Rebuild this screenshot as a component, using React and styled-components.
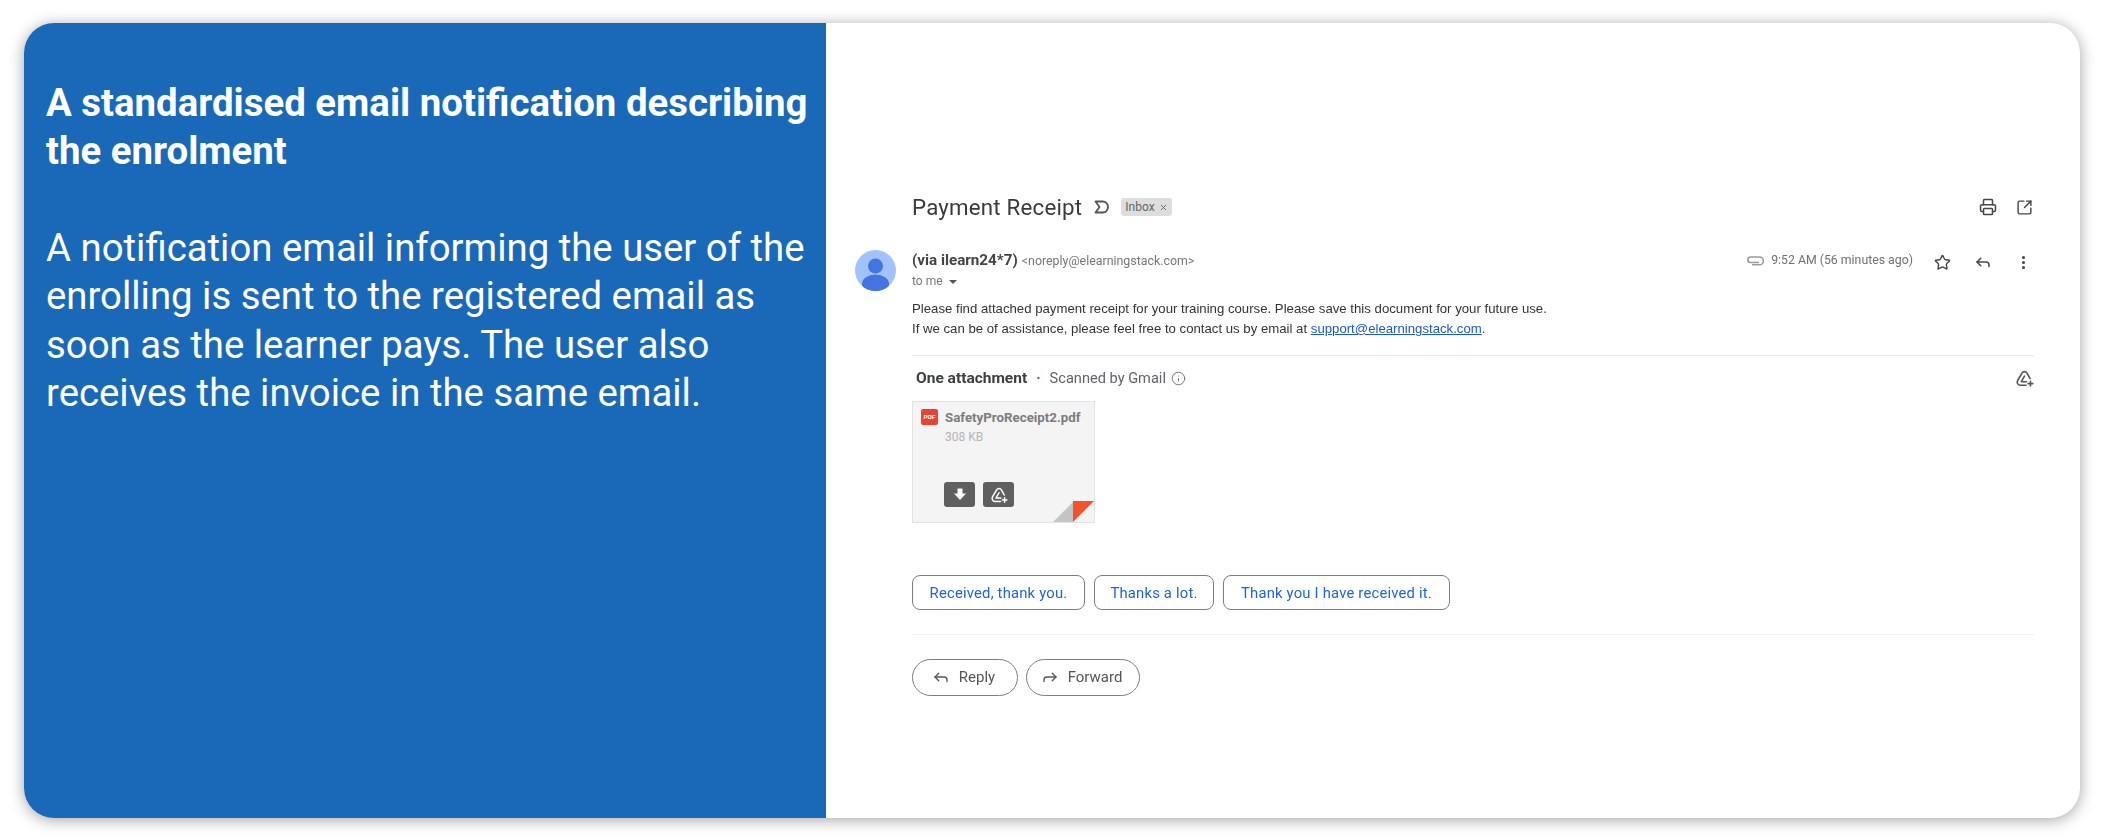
import React from 'react';
import styled, { createGlobalStyle } from 'styled-components';
import { Printer, SquareArrowOutUpRight, Star, Reply, Forward, EllipsisVertical, Info, X } from 'lucide-react';

const GlobalStyle = createGlobalStyle`
  html, body {
    margin: 0;
    padding: 0;
    background: #fff;
  }
  body {
    font-family: "Liberation Sans", Arial, sans-serif;
  }
`;

const Page = styled.div`
  width: 2101px;
  height: 839px;
  box-sizing: border-box;
  padding: 23px 21px 21px 24px;
  overflow: hidden;
`;

const Card = styled.div`
  display: flex;
  height: 795px;
  border-radius: 30px;
  overflow: hidden;
  background: #fff;
  box-shadow: 0 2px 15px rgba(0, 0, 0, 0.36);
`;

const Side = styled.div`
  width: 802px;
  flex: none;
  box-sizing: border-box;
  padding: 56px 8px 0 22px;
  background: #1a69b8;
  color: #fff;
  font-family: Roboto, sans-serif;
`;

const Heading = styled.h1`
  margin: 0 0 50px;
  font-size: 38.4px;
  line-height: 47.5px;
  font-weight: 700;
`;

const Lead = styled.p`
  margin: 0;
  font-size: 38.35px;
  line-height: 48.4px;
  font-weight: 400;
`;

const Mail = styled.div`
  flex: 1;
  box-sizing: border-box;
  padding: 171px 46px 0 86px;
  color: #3c4043;
  filter: blur(0.35px);
`;

const SubjectRow = styled.div`
  display: flex;
  align-items: center;
  height: 26px;
`;

const Subject = styled.div`
  font-family: Roboto, sans-serif;
  font-size: 22.3px;
  color: #3a3a3a;
  letter-spacing: 0.2px;
`;

const Chip = styled.span`
  display: inline-flex;
  align-items: center;
  gap: 4px;
  height: 18px;
  margin-left: 11px;
  padding: 0 4px;
  border-radius: 3px;
  background: #dddddd;
  color: #666;
  font-family: Roboto, sans-serif;
  font-size: 12px;
`;

const IconGroup = styled.div`
  display: flex;
  align-items: center;
  margin-left: auto;
  gap: ${p => p.$gap || 20}px;
  color: ${p => p.$color || '#444746'};
`;

const TopIcons = styled(IconGroup)`
  margin-right: 1px;
`;

const SenderRow = styled.div`
  position: relative;
  display: flex;
  justify-content: space-between;
  margin-top: 30px;
  height: 40px;
`;

const Avatar = styled.svg`
  position: absolute;
  left: -57px;
  top: 0;
  width: 41px;
  height: 41px;
`;

const Sender = styled.div`
  font-size: 14px;
  line-height: 20px;
`;

const SenderName = styled.span`
  font-family: Roboto, sans-serif;
  font-weight: 700;
  font-size: 15.2px;
  color: #444;
`;

const SenderMail = styled.span`
  margin-left: 4px;
  font-family: Roboto, sans-serif;
  font-size: 12.4px;
  color: #777;
`;

const ToMe = styled.div`
  display: flex;
  align-items: center;
  gap: 6px;
  font-family: Roboto, sans-serif;
  font-size: 12px;
  color: #777;
`;

const Caret = styled.span`
  width: 0;
  height: 0;
  margin-top: 2px;
  border-left: 4px solid transparent;
  border-right: 4px solid transparent;
  border-top: 4px solid #555;
`;

const Meta = styled.div`
  display: flex;
  align-items: flex-start;
`;

const Time = styled.span`
  display: flex;
  align-items: center;
  gap: 7px;
  height: 20px;
  margin: 0 21px 0 0;
  font-family: Roboto, sans-serif;
  font-size: 12.3px;
  color: #6f6f6f;
`;

const MetaIcons = styled(IconGroup)`
  margin-top: 3px;
  margin-right: 2px;
`;

const Body = styled.div`
  margin-top: 9px;
  font-size: 13.2px;
  line-height: 20px;
  color: #333;
`;

const MailLink = styled.a`
  color: #1a56d6;
  text-decoration: underline;
`;

const Rule = styled.div`
  height: 1px;
  margin-top: ${p => p.$top}px;
  background: ${p => p.$color};
`;

const AttachHead = styled.div`
  display: flex;
  align-items: center;
  height: 22px;
  margin: 11px 0 12px 4px;
  font-family: Roboto, sans-serif;
  font-size: 14.6px;
  color: #5f6368;
`;

const AttachTitle = styled.span`
  font-weight: 700;
  font-size: 15.5px;
  color: #3c4043;
`;

const Dot = styled.span`
  margin: 0 9px;
  font-weight: 700;
`;

const InfoWrap = styled.span`
  display: inline-flex;
  margin-left: 5px;
  color: #777;
`;

const AttachCard = styled.div`
  position: relative;
  width: 183px;
  height: 122px;
  box-sizing: border-box;
  padding: 7px 8px;
  background: #f4f4f4;
  border: 1px solid #e2e2e2;
`;

const FileRow = styled.div`
  display: flex;
  align-items: center;
  gap: 7px;
`;

const PdfBadge = styled.span`
  display: flex;
  align-items: center;
  justify-content: center;
  width: 17px;
  height: 16px;
  border-radius: 2px;
  background: #ea4335;
  color: #fff;
  font-family: "Liberation Sans", sans-serif;
  font-size: 6px;
  font-weight: 700;
`;

const FileName = styled.span`
  font-family: Roboto, sans-serif;
  font-size: 13.3px;
  font-weight: 700;
  color: #7d7d7d;
`;

const FileSize = styled.div`
  margin: 5px 0 0 24px;
  font-family: Roboto, sans-serif;
  font-size: 12px;
  color: #b4b4b4;
`;

const FileActions = styled.div`
  display: flex;
  gap: 8px;
  margin: 38px 0 0 23px;
`;

const FileAction = styled.span`
  display: flex;
  align-items: center;
  justify-content: center;
  width: 31px;
  height: 25px;
  border-radius: 3px;
  background: #5f5f5f;
  color: #fff;
`;

const Fold = styled.svg`
  position: absolute;
  right: 0;
  bottom: 0;
  width: 41px;
  height: 21px;
`;

const Suggestions = styled.div`
  display: flex;
  gap: 9px;
  margin-top: 52px;
`;

const Suggestion = styled.span`
  display: flex;
  align-items: center;
  justify-content: center;
  box-sizing: border-box;
  width: ${p => p.$width}px;
  height: 35px;
  border: 1px solid #7d7d7d;
  border-radius: 8px;
  color: #1f62d8;
  font-family: Roboto, sans-serif;
  font-size: 14.8px;
  letter-spacing: 0.2px;
`;

const Actions = styled.div`
  display: flex;
  gap: 8px;
  margin-top: 24px;
`;

const ActionBtn = styled.span`
  display: flex;
  align-items: center;
  justify-content: center;
  gap: 9px;
  box-sizing: border-box;
  width: ${p => p.$width}px;
  height: 37px;
  padding-right: 3px;
  padding-bottom: 1px;
  border: 1px solid #7d7d7d;
  border-radius: 19px;
  color: #555;
  font-family: Roboto, sans-serif;
  font-size: 15px;
`;

const Importance = () => (
  <svg width="16" height="14" viewBox="0 0 16 14" style={{ marginLeft: 12 }}>
    <path d="M1.500 1.500h7.500c2.700 0 5 2.400 5 5.500s-2.300 5.500-5 5.500h-7.500L5.500 7z" fill="none" stroke="#555" strokeWidth="1.800" strokeLinejoin="round" />
  </svg>
);

const DriveAdd = ({ size = 18, color = 'currentColor' }) => (
  <svg width={size} height={size} viewBox="0 0 24 24" fill="none" stroke={color} strokeWidth="2" strokeLinejoin="round" strokeLinecap="round">
    <path d="M14 20.500H7C3.500 20.500 1.800 17 3.500 14.200L8.800 5.200C10.300 2.700 13.700 2.700 15.200 5.200L19 12" />
    <path d="M12 9L8 16H14.500" />
    <path d="M19.500 15.500v6M16.500 18.500h6" />
  </svg>
);

const DownloadGlyph = () => (
  <svg width="14" height="15" viewBox="0 0 14 15" fill="#fff">
    <path d="M4.500 1.500h5v5H13L7 13 1 6.500h3.500z" />
  </svg>
);

const Clip = () => (
  <svg width="18" height="12" viewBox="0 0 18 12" fill="none" stroke="#9a9a9a" strokeWidth="1.600">
    <path d="M13 8.500H4.500a2.500 2.500 0 0 1 0-5.500H13.500a3.800 3.800 0 0 1 0 7.800H6" />
  </svg>
);

export default function App() {
  return (
    <Page>
      <GlobalStyle />
      <Card>
        <Side>
          <Heading>A standardised email notification describing the enrolment</Heading>
          <Lead>A notification email informing the user of the enrolling is sent to the registered email as soon as the learner pays. The user also receives the invoice in the same email.</Lead>
        </Side>
        <Mail>
          <SubjectRow>
            <Subject>Payment Receipt</Subject>
            <Importance />
            <Chip>Inbox <X size={9} strokeWidth={2.5} /></Chip>
            <TopIcons $gap={19}>
              <Printer size={18} strokeWidth={2} />
              <SquareArrowOutUpRight size={17} strokeWidth={2} />
            </TopIcons>
          </SubjectRow>
          <SenderRow>
            <Avatar viewBox="0 0 41 41">
              <defs>
                <clipPath id="avatar-clip"><circle cx="20.5" cy="20.5" r="20.5" /></clipPath>
              </defs>
              <circle cx="20.5" cy="20.5" r="20.5" fill="#a0c3ff" />
              <circle cx="20.5" cy="16" r="7.5" fill="#4374e0" />
              <ellipse cx="20.5" cy="34" rx="13.5" ry="9.5" fill="#4374e0" clipPath="url(#avatar-clip)" />
            </Avatar>
            <Sender>
              <SenderName>(via ilearn24*7)</SenderName>
              <SenderMail>&lt;noreply@elearningstack.com&gt;</SenderMail>
              <ToMe>to me <Caret /></ToMe>
            </Sender>
            <Meta>
              <Time><Clip />9:52 AM (56 minutes ago)</Time>
              <MetaIcons $gap={23}>
                <Star size={17} strokeWidth={2} />
                <Reply size={18} strokeWidth={2} />
                <EllipsisVertical size={17} strokeWidth={2.4} />
              </MetaIcons>
            </Meta>
          </SenderRow>
          <Body>
            Please find attached payment receipt for your training course. Please save this document for your future use.<br />
            If we can be of assistance, please feel free to contact us by email at <MailLink>support@elearningstack.com</MailLink>.
          </Body>
          <Rule $top={16} $color="#e8e8e8" />
          <AttachHead>
            <AttachTitle>One attachment</AttachTitle>
            <Dot>·</Dot>
            Scanned by Gmail
            <InfoWrap><Info size={15} strokeWidth={1.6} /></InfoWrap>
            <IconGroup $color="#555"><DriveAdd size={19} /></IconGroup>
          </AttachHead>
          <AttachCard>
            <FileRow>
              <PdfBadge>PDF</PdfBadge>
              <FileName>SafetyProReceipt2.pdf</FileName>
            </FileRow>
            <FileSize>308 KB</FileSize>
            <FileActions>
              <FileAction><DownloadGlyph /></FileAction>
              <FileAction><DriveAdd size={18} color="#fff" /></FileAction>
            </FileActions>
            <Fold viewBox="0 0 41 21">
              <path d="M0 21L20 1v20z" fill="#c4c4c4" />
              <path d="M20 0h21L20 21z" fill="#f4512c" />
            </Fold>
          </AttachCard>
          <Suggestions>
            <Suggestion $width={173}>Received, thank you.</Suggestion>
            <Suggestion $width={120}>Thanks a lot.</Suggestion>
            <Suggestion $width={227}>Thank you I have received it.</Suggestion>
          </Suggestions>
          <Rule $top={24} $color="#eeeeee" />
          <Actions>
            <ActionBtn $width={106}><Reply size={18} strokeWidth={1.8} />Reply</ActionBtn>
            <ActionBtn $width={114}><Forward size={18} strokeWidth={1.8} />Forward</ActionBtn>
          </Actions>
        </Mail>
      </Card>
    </Page>
  );
}
